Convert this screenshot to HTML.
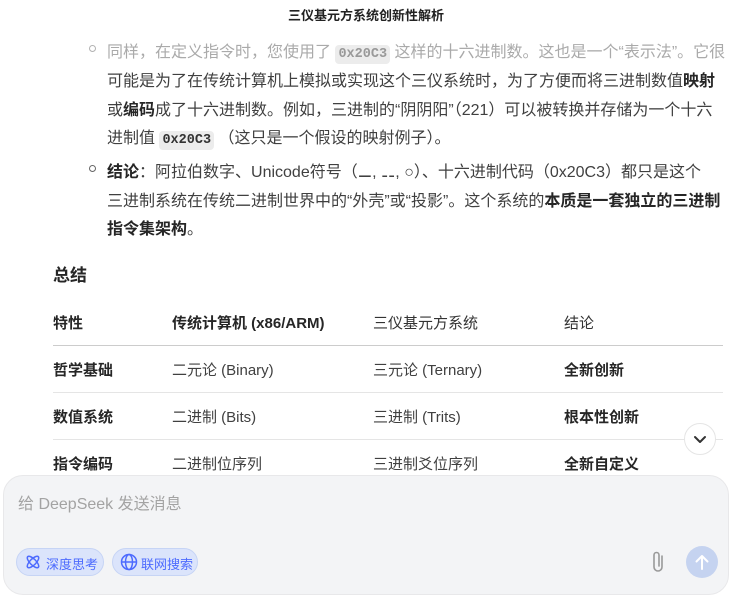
<!DOCTYPE html>
<html><head><meta charset="utf-8"><style>
*{margin:0;padding:0;box-sizing:border-box}
body{width:732px;height:579px;overflow:hidden;background:#fff;font-family:"Liberation Sans","Noto Sans CJK SC",sans-serif;color:#404040;position:relative}
.t{position:absolute;white-space:nowrap}
.p{font-size:16px;left:107px}
b{color:#262626;font-weight:bold}
code{font-family:"Liberation Mono",monospace;font-weight:bold;font-size:13.5px;background:#ececec;border-radius:4px;padding:2px 3px;color:#333}
.dot{position:absolute;left:89px;width:7px;height:7px;border:1.3px solid #666;border-radius:50%}
.th{font-size:15px;font-weight:bold;color:#262626}
.td{font-size:15px;color:#404040}
.line{position:absolute;left:53px;width:670px;height:1px;background:#e5e5e5}
</style></head><body>
<div class="t" style="left:0;width:732px;text-align:center;top:5px;font-size:13px;font-weight:bold;color:#222">三仪基元方系统创新性解析</div>
<div class="dot" style="top:45px;opacity:.5"></div>
<div class="t p" style="top:38px;color:#aaa">同样，在定义指令时，您使用了 <code style="color:#999">0x20C3</code> 这样的十六进制数。这也是一个“表示法”。它很</div>
<div class="t p" style="top:67px">可能是为了在传统计算机上模拟或实现这个三仪系统时，为了方便而将三进制数值<b>映射</b></div>
<div class="t p" style="top:96px">或<b>编码</b>成了十六进制数。例如，三进制的“阴阴阳”（221）可以被转换并存储为一个十六</div>
<div class="t p" style="top:124px">进制值 <code>0x20C3</code> （这只是一个假设的映射例子）。</div>
<div class="dot" style="top:165px"></div>
<div class="t p" style="top:158px"><b>结论</b>：阿拉伯数字、Unicode符号（⚊, ⚋, ○）、十六进制代码（0x20C3）都只是这个</div>
<div class="t p" style="top:187px">三进制系统在传统二进制世界中的“外壳”或“投影”。这个系统的<b>本质是一套独立的三进制</b></div>
<div class="t p" style="top:215px"><b>指令集架构</b>。</div>
<div class="t" style="left:53px;top:261px;font-size:17px;font-weight:bold;color:#262626">总结</div>
<div class="t th" style="left:53px;top:312px">特性</div>
<div class="t th" style="left:172px;top:312px">传统计算机 (x86/ARM)</div>
<div class="t th" style="left:373px;top:312px;font-weight:normal;color:#333">三仪基元方系统</div>
<div class="t th" style="left:564px;top:312px;font-weight:normal;color:#333">结论</div>
<div class="line" style="top:345px;background:#ccc"></div>
<div class="t th" style="left:53px;top:359px">哲学基础</div>
<div class="t td" style="left:172px;top:359px">二元论 (Binary)</div>
<div class="t td" style="left:373px;top:359px">三元论 (Ternary)</div>
<div class="t th" style="left:564px;top:359px">全新创新</div>
<div class="line" style="top:392px"></div>
<div class="t th" style="left:53px;top:406px">数值系统</div>
<div class="t td" style="left:172px;top:406px">二进制 (Bits)</div>
<div class="t td" style="left:373px;top:406px">三进制 (Trits)</div>
<div class="t th" style="left:564px;top:406px">根本性创新</div>
<div class="line" style="top:439px"></div>
<div class="t th" style="left:53px;top:453px">指令编码</div>
<div class="t td" style="left:172px;top:453px">二进制位序列</div>
<div class="t td" style="left:373px;top:453px">三进制爻位序列</div>
<div class="t th" style="left:564px;top:453px">全新自定义</div>
<div style="position:absolute;left:684px;top:423px;width:32px;height:32px;border-radius:50%;background:#fff;border:1px solid #e5e5e5"><svg width="30" height="30" viewBox="0 0 30 30"><path d="M10 13l5 5 5-5" fill="none" stroke="#333" stroke-width="2" stroke-linecap="round" stroke-linejoin="round"/></svg></div>
<div style="position:absolute;left:3px;top:475px;width:726px;height:120px;border-radius:20px;background:#f3f4f6;border:1px solid #e8e8ea"></div>
<div class="t" style="left:18px;top:490px;font-size:16px;color:#a3a3a3">给 DeepSeek 发送消息</div>
<div style="position:absolute;left:16px;top:548px;width:88px;height:28px;border-radius:14px;background:#dbe4fb;border:1px solid #c6d4f5"></div>
<svg style="position:absolute;left:24px;top:553px" width="18" height="18" viewBox="0 0 18 18"><g fill="none" stroke="#4d6bfe" stroke-width="1.5"><ellipse cx="9" cy="9" rx="7.5" ry="3" transform="rotate(45 9 9)"/><ellipse cx="9" cy="9" rx="7.5" ry="3" transform="rotate(-45 9 9)"/></g></svg>
<div class="t" style="left:46px;top:554px;font-size:13px;color:#4d6bfe">深度思考</div>
<div style="position:absolute;left:112px;top:548px;width:86px;height:28px;border-radius:14px;background:#dbe4fb;border:1px solid #c6d4f5"></div>
<svg style="position:absolute;left:120px;top:553px" width="18" height="18" viewBox="0 0 18 18"><g fill="none" stroke="#4d6bfe" stroke-width="1.5"><circle cx="9" cy="9" r="7.5"/><ellipse cx="9" cy="9" rx="3.5" ry="7.5"/><path d="M1.5 9h15"/></g></svg>
<div class="t" style="left:141px;top:554px;font-size:13px;color:#4d6bfe">联网搜索</div>
<svg style="position:absolute;left:650px;top:549px" width="18" height="26" viewBox="0 0 18 26"><path d="M12 7v11a4 4 0 0 1-8 0V6a2.5 2.5 0 0 1 5 0v11" fill="none" stroke="#999" stroke-width="1.6" stroke-linecap="round"/></svg>
<div style="position:absolute;left:686px;top:546px;width:32px;height:32px;border-radius:50%;background:#c5d3f0"><svg width="32" height="32" viewBox="0 0 32 32"><path d="M16 23V10M10.5 15.5L16 10l5.5 5.5" fill="none" stroke="#fff" stroke-width="2" stroke-linecap="round" stroke-linejoin="round"/></svg></div>
</body></html>
